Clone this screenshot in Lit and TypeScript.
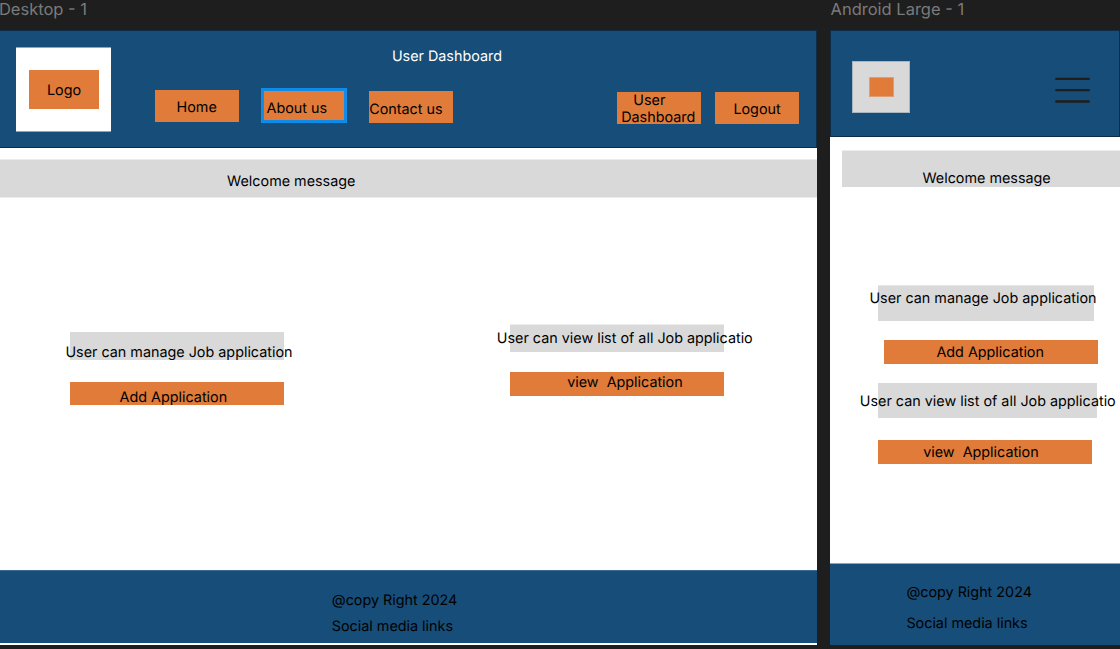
import { LitElement, html, css } from "lit";
import { customElement } from "lit/decorators.js";

const shared = css`
  * { box-sizing: border-box; }
  .block { display: flex; align-items: flex-start; white-space: pre; overflow: visible; flex: none; }
  .orange { background: #e07b39; }
  .gray { background: #d9d9d9; }
`;

@customElement("desktop-frame")
class DesktopFrame extends LitElement {
  static styles = [shared, css`
    :host { display: flex; flex-direction: column; width: 817px; height: 615px; background: #fff; }
    header { display: flex; align-items: flex-start; height: 118px; padding: 16px 0 0 16px; background: #174d79; border: 1px solid #0f2c46; border-left: 0; border-bottom-color: #082d4e; }
    .logo { width: 95px; height: 85px; background: #fff; padding: 22px 0 0 13px; border: solid #8ba6bc; border-width: 1px 0; }
    .mark { width: 70px; height: 39px; padding: 11px 0 0 18px; }
    .middle { width: 506px; }
    .heading { margin: 0; padding: 0 0 0 280.9px; font: inherit; color: #fff; height: 43px; }
    nav { display: flex; align-items: flex-start; }
    .btn { width: 84px; height: 32px; }
    .home { margin-left: 44px; padding: 8px 0 0 21.6px; }
    .about { margin: -2px 0 0 22px; width: 86px; height: 35px; border: 3px solid #118be8; padding: 8px 0 0 2.6px; }
    .contact { margin: 1px 0 0 22px; padding: 9px 0 0 0.2px; }
    .user { margin-top: 45px; height: 32px; line-height: 17px; padding: 0 0 0 4.2px; }
    .logout { margin: 45px 0 0 14px; padding: 8px 0 0 18.4px; }
    .welcome { margin-top: 11px; height: 39px; border: solid #ececec; border-width: 1px 0; padding: 12px 0 0 227.1px; }
    .cards { display: flex; align-items: flex-start; flex: 1; padding-left: 70px; }
    .card { width: 214px; }
    .manage { margin-top: 134px; }
    .list { margin: 126px 0 0 226px; }
    .info { height: 28px; }
    .manage .info { padding-top: 11px; }
    .list .info { border-top: 1px solid #ececec; padding-top: 4px; }
    .info span { margin-left: -4.6px; }
    .list .info span { margin-left: -13.2px; }
    .action { margin-top: 22px; height: 23px; padding: 6px 0 0 49.6px; }
    .list .action { margin-top: 20px; height: 24px; padding: 1px 0 0 57.2px; }
    footer { height: 73px; margin-bottom: 2px; padding: 20px 0 0 331.8px; background: #174d79; display: flex; flex-direction: column; gap: 7px; border-top: 1px solid #3c6a90; }
  `];
  render() {
    return html`
      <header>
        <div class="logo"><div class="block orange mark">Logo</div></div>
        <div class="middle">
          <h1 class="heading">User Dashboard</h1>
          <nav>
            <a class="block orange btn home">Home</a>
            <a class="block orange btn about">About us</a>
            <a class="block orange btn contact">Contact us</a>
          </nav>
        </div>
        <a class="block orange btn user">${"   User\nDashboard"}</a>
        <a class="block orange btn logout">Logout</a>
      </header>
      <div class="block gray welcome">Welcome message</div>
      <main class="cards">
        <section class="card manage">
          <div class="block gray info"><span>User can manage Job application</span></div>
          <div class="block orange action">Add Application</div>
        </section>
        <section class="card list">
          <div class="block gray info"><span>User can view list of all Job applicatio</span></div>
          <div class="block orange action">view  Application</div>
        </section>
      </main>
      <footer><span>@copy Right 2024</span><span>Social media links</span></footer>
    `;
  }
}

@customElement("android-frame")
class AndroidFrame extends LitElement {
  static styles = [shared, css`
    :host { display: flex; flex-direction: column; width: 290px; height: 615px; background: #fff; border-right: 1px solid #c4c4c4; }
    header { display: flex; justify-content: space-between; align-items: flex-start; height: 107px; width: 290px; padding: 30px 28px 0 21px; background: #174d79; border: 1px solid #0f2c46; }
    .logo { width: 58px; height: 52px; padding: 15px 0 0 16px; border: 1px solid #a8b6c1; }
    .mark { width: 25px; height: 20px; border: 1px solid #de9d73; }
    svg { display: block; margin-top: 15px; }
    .welcome { margin: 13px 0 0 12px; height: 37px; width: 278px; border-top: 1px solid #ececec; padding: 18px 0 0 80.4px; }
    main { flex: 1; padding-left: 48px; }
    .info { height: 36px; }
    .a { width: 216px; margin-top: 98px; padding-top: 3px; border-top: 1px solid #e6e6e6; }
    .a span { margin-left: -8.6px; }
    .b { width: 214px; height: 24px; margin: 19px 0 0 5.5px; padding: 3px 0 0 52.9px; }
    .c { width: 219px; margin-top: 19px; height: 35px; padding-top: 9px; }
    .c span { margin-left: -18.2px; }
    .d { width: 214px; height: 24px; margin-top: 22px; padding: 3px 0 0 45.2px; }
    footer { width: 290px; height: 82px; padding: 19px 0 0 76.4px; background: #174d79; border-top: 1px solid #8ba6bc; display: flex; flex-direction: column; gap: 12px; }
  `];
  render() {
    return html`
      <header>
        <div class="gray logo"><div class="orange mark"></div></div>
        <svg width="36" height="30" viewBox="0 0 36 30" fill="none" stroke="#1e1e1e" stroke-width="2.3" stroke-linecap="round">
          <path d="M1.2 2.9H33.8M1.2 14.2H33.8M1.2 25.5H33.8" />
        </svg>
      </header>
      <div class="block gray welcome">Welcome message</div>
      <main>
        <div class="block gray info a"><span>User can manage Job application</span></div>
        <div class="block orange b">Add Application</div>
        <div class="block gray info c"><span>User can view list of all Job applicatio</span></div>
        <div class="block orange d">view  Application</div>
      </main>
      <footer><span>@copy Right 2024</span><span>Social media links</span></footer>
    `;
  }
}

@customElement("app-root")
class AppRoot extends LitElement {
  static styles = css`
    :host { display: block; width: 1120px; height: 649px; overflow: hidden; background: #1e1e1e; font: 14.35px/19px Inter, sans-serif; color: #000; text-rendering: geometricPrecision; }
    .canvas { display: flex; gap: 13px; }
    .title { height: 30px; line-height: 18px; padding-left: 0.5px; font-size: 16.5px; color: #7a7a7a; white-space: nowrap; }
    .desk { margin-left: -1.6px; }
  `;
  render() {
    return html`
      <div class="canvas">
        <div><div class="title desk">Desktop - 1</div><desktop-frame></desktop-frame></div>
        <div><div class="title">Android Large - 1</div><android-frame></android-frame></div>
      </div>
    `;
  }
}
